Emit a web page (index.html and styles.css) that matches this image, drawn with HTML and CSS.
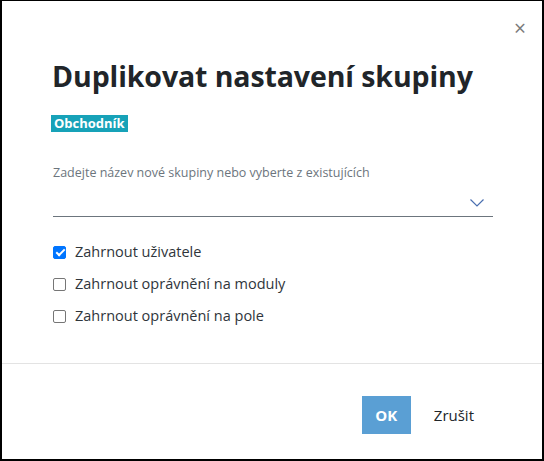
FILE: index.html
```html
<!DOCTYPE html>
<html lang="cs">
  <head>
    <meta charset="UTF-8" />
    <meta name="viewport" content="width=device-width, initial-scale=1.0" />
    <title>Duplikovat nastavení skupiny</title>
    <link rel="stylesheet" href="styles.css">
  </head>
  <body>
    <div class="modal">
      <div class="modal-head">
        <span class="close">&times;</span>
      </div>
      <div class="modal-body">
        <h1 class="title">Duplikovat nastavení skupiny</h1>
        <span class="badge">Obchodník</span>
        <div class="field">
          <label class="field-label">Zadejte název nové skupiny nebo vyberte z existujících</label>
          <div class="select">
            <svg width="14" height="8" viewBox="0 0 14 8">
              <path d="M0.5 0.5 L7 7 L13.5 0.5" fill="none" stroke="#4a6fb0" stroke-width="1.2" />
            </svg>
          </div>
        </div>
        <ul class="checks">
          <li><span class="box on"></span>Zahrnout uživatele</li>
          <li><span class="box"></span>Zahrnout oprávnění na moduly</li>
          <li><span class="box"></span>Zahrnout oprávnění na pole</li>
        </ul>
      </div>
      <div class="modal-foot">
        <button class="btn-ok">OK</button>
        <button class="btn-cancel">Zrušit</button>
      </div>
    </div>
  </body>
</html>
```

FILE: styles.css
```css
* {
  margin: 0;
  padding: 0;
  box-sizing: border-box;
}
ul {
  list-style: none;
}
body {
  font-family: "Open Sans", "Noto Sans", sans-serif;
  color: #212529;
  background: #fff;
}
.modal {
  width: 544px;
  height: 461px;
  border: 2px solid #000;
  border-top-width: 1px;
  display: flex;
  flex-direction: column;
}
.modal-head {
  height: 55px;
  display: flex;
  justify-content: flex-end;
  padding: 14px 16px 0 0;
}
.close {
  color: #7a7a7a;
  font-size: 21px;
  line-height: 26px;
}
.modal-body {
  padding: 0 49px;
  border-bottom: 1px solid #e3e3e3;
  height: 308px;
  display: flex;
  flex-direction: column;
  align-items: flex-start;
}
.title {
  font-size: 28.5px;
  font-weight: 700;
  line-height: 40px;
  letter-spacing: -0.1px;
  margin-left: 1px;
  margin-bottom: 19px;
}
.badge {
  background: #17a2b8;
  color: #fff;
  font-size: 13px;
  font-weight: 700;
  line-height: 17px;
  padding: 0 3px;
}
.field {
  align-self: stretch;
  margin-top: 32px;
  margin-left: 2px;
}
.field-label {
  display: block;
  font-size: 12.5px;
  color: #6c757d;
  line-height: 18px;
}
.select {
  height: 35px;
  border-bottom: 1px solid #6c757d;
  display: flex;
  justify-content: flex-end;
  align-items: center;
  padding-right: 9px;
  padding-top: 7px;
}
.checks {
  margin-top: 19px;
  margin-left: 2px;
}
.checks li {
  display: flex;
  align-items: center;
  font-size: 14.5px;
  line-height: 32px;
  color: #2f353b;
}
.box {
  width: 13px;
  height: 13px;
  border: 1px solid #767676;
  border-radius: 2px;
  margin-right: 9px;
  position: relative;
}
.box.on {
  background: #0075ff;
  border-color: #0075ff;
}
.box.on::after {
  content: "";
  position: absolute;
  left: 3.5px;
  top: 0.5px;
  width: 3px;
  height: 7px;
  border: solid #fff;
  border-width: 0 2px 2px 0;
  transform: rotate(45deg);
}
.modal-foot {
  flex: 1;
  display: flex;
  justify-content: flex-end;
  align-items: flex-start;
  padding: 32px 62px 0 0;
}
.btn-ok {
  width: 49px;
  height: 38px;
  border: none;
  background: #5a9fd4;
  color: #fff;
  font-family: inherit;
  font-size: 15px;
  font-weight: 700;
}
.btn-cancel {
  border: none;
  background: none;
  font-family: inherit;
  font-size: 15px;
  color: #212529;
  height: 38px;
  padding: 0 6px;
  margin-left: 17px;
}
```
